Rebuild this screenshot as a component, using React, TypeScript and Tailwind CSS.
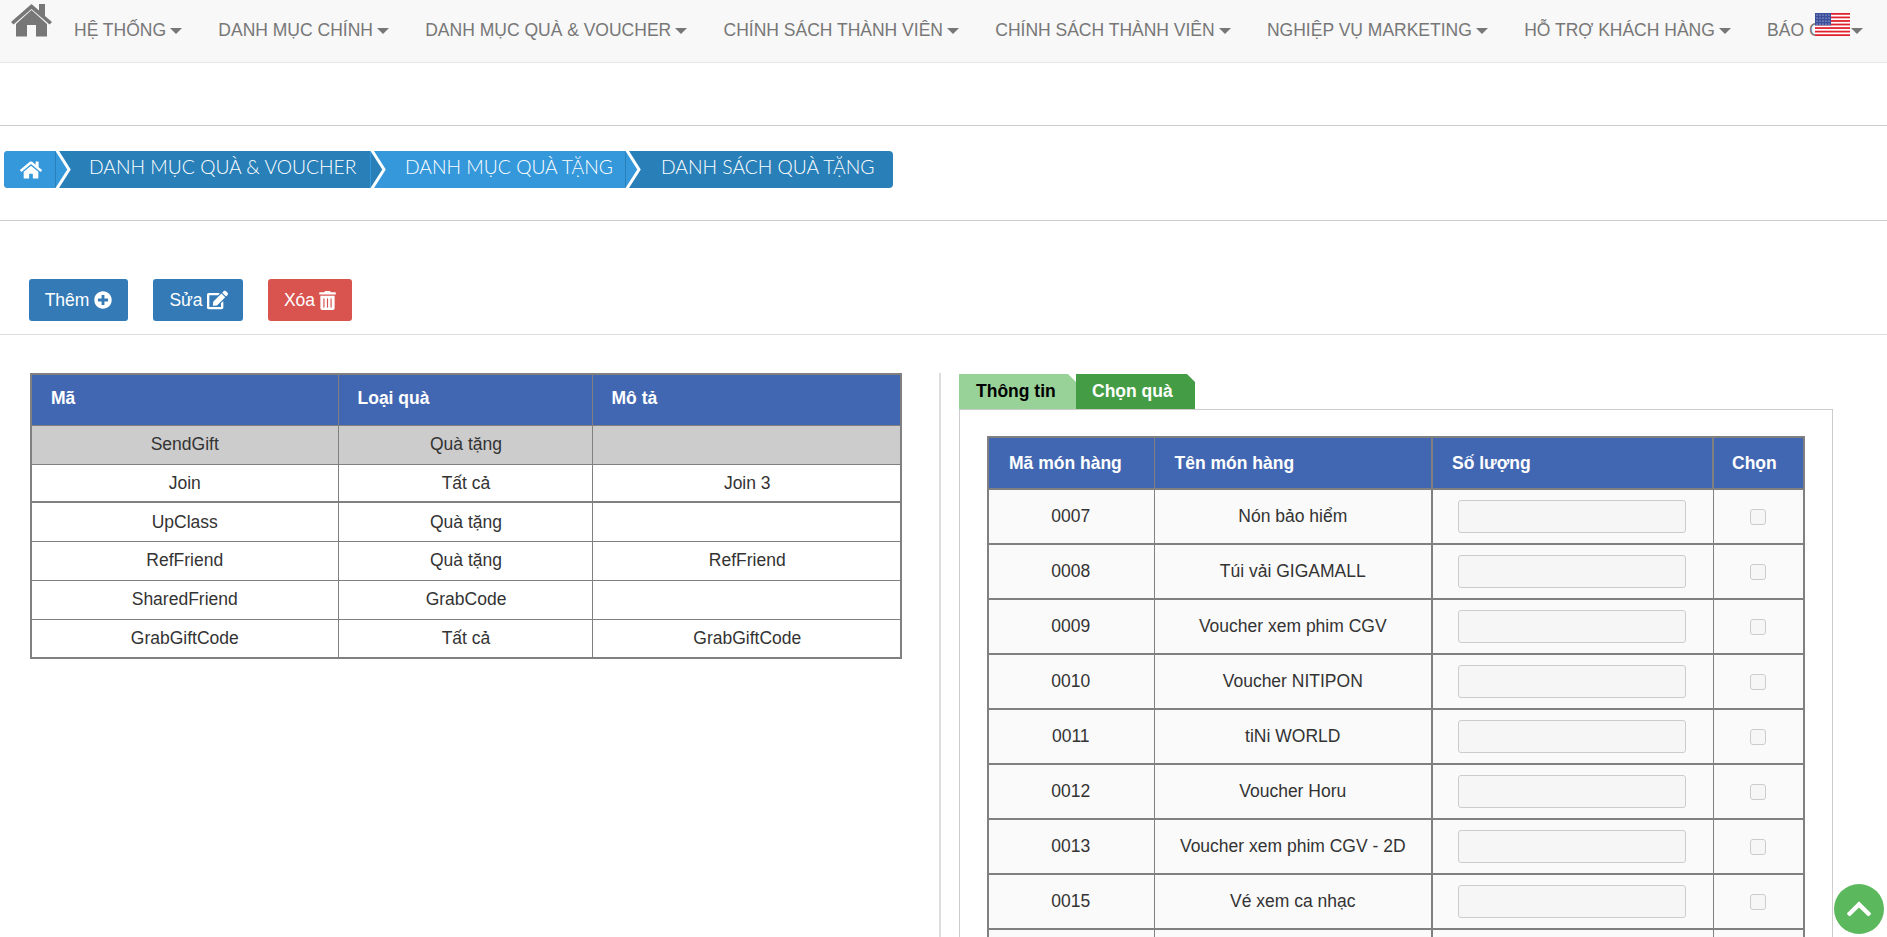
import { FaHome, FaPlusCircle, FaEdit, FaTrashAlt, FaChevronUp } from 'react-icons/fa';

const navItems = [
  'HỆ THỐNG',
  'DANH MỤC CHÍNH',
  'DANH MỤC QUÀ & VOUCHER',
  'CHÍNH SÁCH THÀNH VIÊN',
  'CHÍNH SÁCH THÀNH VIÊN',
  'NGHIỆP VỤ MARKETING',
  'HỖ TRỢ KHÁCH HÀNG',
  'BÁO CÁO',
];

const gifts = [
  { code: 'SendGift', type: 'Quà tặng', desc: '' },
  { code: 'Join', type: 'Tất cả', desc: 'Join 3' },
  { code: 'UpClass', type: 'Quà tặng', desc: '' },
  { code: 'RefFriend', type: 'Quà tặng', desc: 'RefFriend' },
  { code: 'SharedFriend', type: 'GrabCode', desc: '' },
  { code: 'GrabGiftCode', type: 'Tất cả', desc: 'GrabGiftCode' },
];

const items = [
  ['0007', 'Nón bảo hiểm'],
  ['0008', 'Túi vải GIGAMALL'],
  ['0009', 'Voucher xem phim CGV'],
  ['0010', 'Voucher NITIPON'],
  ['0011', 'tiNi WORLD'],
  ['0012', 'Voucher Horu'],
  ['0013', 'Voucher xem phim CGV - 2D'],
  ['0015', 'Vé xem ca nhạc'],
  ['', ''],
];

function Chevron({ className }: { className: string }) {
  return (
    <span className={`relative h-full w-[17px] shrink-0 ${className}`}>
      <svg viewBox="0 0 17 37" className="absolute left-0 top-0 h-full w-[17px]" preserveAspectRatio="none">
        <path d="M1 -2 L14 18.5 L1 39" fill="currentColor" stroke="#fff" strokeWidth="3" />
      </svg>
    </span>
  );
}

function NavHome() {
  return (
    <svg viewBox="0 0 41 33" className="ml-[11px] mt-[4px] h-[33px] w-[41px] shrink-0 fill-[#777]">
      <path d="M20.5 0 L28 6.5 V0 H34 V12 L41 18 L38.5 20.5 L20.5 5 L2.5 20.5 L0 18 Z" />
      <path d="M5 20 L20.5 6 L36 20 V32.5 H25 V21 H16 V32.5 H5 Z" />
    </svg>
  );
}

function UsFlag() {
  return (
    <svg viewBox="0 0 35 23" className="absolute left-[1815px] top-[13px] h-[23px] w-[35px]">
      <rect width="35" height="23" fill="#fff" />
      {[0, 2, 4, 6, 8, 10, 12].map((i) => (
        <rect key={i} y={i * 1.77} width="35" height="1.77" fill="#e0202c" />
      ))}
      <rect width="16" height="12.4" fill="#3c4f9c" />
      {[2, 5, 8, 11, 14].map((x) =>
        [2, 5, 8, 11].map((y) => <circle key={`${x}-${y}`} cx={x} cy={y} r="0.6" fill="#dfe3f5" />),
      )}
    </svg>
  );
}

export default function App() {
  return (
    <div className="relative h-[937px] overflow-hidden bg-white font-['Liberation_Sans',Arial,sans-serif] text-[#333]">
      {/* Navbar */}
      <nav className="flex h-[63px] items-start overflow-hidden border-b border-[#e7e7e7] bg-[#f8f8f8] text-[#777]">
        <NavHome />
        <ul className="ml-[22px] flex gap-[36.3px] pt-[20px] text-[17.5px] leading-[20px]">
          {navItems.map((item, i) => (
            <li key={i} className="flex items-center gap-[4px] whitespace-nowrap">
              {item}
              <span className="mt-[2px] h-0 w-0 border-x-[6px] border-t-[6px] border-x-transparent border-t-[#777]" />
            </li>
          ))}
        </ul>
      </nav>
      <UsFlag />

      <div className="h-[63px] border-b border-[#ccc]" />

      {/* Breadcrumb */}
      <div className="h-[95px] border-b border-[#ccc] pl-[4px] pt-[25px]">
        <div className="flex h-[37px] w-[889px] items-center overflow-hidden rounded-[4px] bg-[#2980b9] font-['Lato',sans-serif] text-[19.3px] font-light text-white">
          <div className="flex h-full w-[51px] items-center justify-center bg-[#3498db]">
            <FaHome className="ml-[3px] h-[20px] w-[22px]" />
          </div>
          <Chevron className="text-[#3498db]" />
          <div className="flex h-full w-[298px] items-center pb-[4px] pl-[17px] whitespace-nowrap">DANH MỤC QUÀ &amp; VOUCHER</div>
          <Chevron className="bg-[#3498db] text-[#2980b9]" />
          <div className="flex h-full w-[238px] items-center bg-[#3498db] pb-[4px] pl-[18px] whitespace-nowrap">DANH MỤC QUÀ TẶNG</div>
          <Chevron className="text-[#3498db]" />
          <div className="flex h-full flex-1 items-center pb-[4px] pl-[19px] whitespace-nowrap">DANH SÁCH QUÀ TẶNG</div>
        </div>
      </div>

      {/* Actions */}
      <div className="flex h-[114px] items-start gap-[25px] border-b border-[#ddd] pl-[29px] pt-[58px] text-[17.5px] text-white">
        <button className="flex h-[42px] w-[99px] items-center justify-center gap-[5px] rounded-[3px] bg-[#337ab7]">
          Thêm <FaPlusCircle className="h-[18px] w-[18px]" />
        </button>
        <button className="flex h-[42px] w-[90px] items-center justify-center gap-[4px] rounded-[3px] bg-[#337ab7] pl-[1px]">
          Sửa <FaEdit className="h-[20px] w-[21px]" />
        </button>
        <button className="flex h-[42px] w-[84px] items-center justify-center gap-[4px] rounded-[3px] bg-[#d9534f]">
          Xóa <FaTrashAlt className="h-[19px] w-[17px]" />
        </button>
      </div>

      <div className="flex pl-[30px] pt-[38px]">
        {/* Gift table */}
        <table className="h-fit w-[872px] table-fixed border-collapse border-2 border-[#808080] text-[17.5px]">
          <colgroup>
            <col className="w-[307px]" />
            <col className="w-[254px]" />
            <col />
          </colgroup>
          <thead>
            <tr className="h-[51px] bg-[#4267b2] text-left font-bold text-white">
              <th className="border border-[#808080] pb-[4px] pl-[19px]">Mã</th>
              <th className="border border-[#808080] pb-[4px] pl-[19px]">Loại quà</th>
              <th className="border border-[#808080] pb-[4px] pl-[19px]">Mô tả</th>
            </tr>
          </thead>
          <tbody>
            {gifts.map((g, i) => {
              const rowBorder = i === 1 ? 'border border-b-2 border-[#808080]' : 'border border-[#808080]';
              return (
                <tr key={g.code} className={`text-center ${i === 0 ? 'bg-[#ccc]' : 'bg-white'} ${i === 1 ? 'h-[38px]' : 'h-[39px]'}`}>
                  <td className={rowBorder}>{g.code}</td>
                  <td className={`${rowBorder} pl-[2px]`}>{g.type}</td>
                  <td className={`${rowBorder} pl-[2px]`}>{g.desc}</td>
                </tr>
              );
            })}
          </tbody>
        </table>

        <div className="ml-[37px] flex min-h-[600px] border-l-2 border-[#ddd] pl-[18px]">
          <div className="w-[874px]">
            {/* Tabs */}
            <div className="flex h-[36px] pt-[1px] text-[17.5px] font-bold leading-[34px]">
              <div className="w-[117px] bg-[#98d298] [clip-path:polygon(0_0,calc(100%-8px)_0,100%_8px,100%_100%,0_100%)] pl-[17px] text-black">Thông tin</div>
              <div className="w-[119px] bg-[#449d44] [clip-path:polygon(0_0,calc(100%-8px)_0,100%_8px,100%_100%,0_100%)] pl-[16px] text-white">Chọn quà</div>
            </div>
            {/* Item panel */}
            <div className="border border-[#ccc] pl-[27px] pr-[26px] pt-[26px]">
              <table className="w-[818px] table-fixed border-collapse border-2 border-[#808080] text-[17.5px]">
                <colgroup>
                  <col className="w-[166px]" />
                  <col className="w-[278px]" />
                  <col className="w-[281px]" />
                  <col />
                </colgroup>
                <thead>
                  <tr className="h-[52px] bg-[#4267b2] text-left font-bold text-white">
                    <th className="border border-[#808080] pl-[20px]">Mã món hàng</th>
                    <th className="border border-[#808080] pl-[20px]">Tên món hàng</th>
                    <th className="border border-x-2 border-[#808080] pl-[19px]">Số lượng</th>
                    <th className="border border-[#808080] pl-[18px]">Chọn</th>
                  </tr>
                </thead>
                <tbody>
                  {items.map(([code, name], i) => (
                    <tr key={i} className="h-[55px] bg-[#fafafa] text-center">
                      <td className="border-2 border-x border-[#808080] pr-[1px]">{code}</td>
                      <td className="border-2 border-x border-[#808080]">{name}</td>
                      <td className="border-2 border-r border-[#808080] pl-[25px] pr-[27px]">
                        <input disabled className="block h-[33px] w-full rounded-[3px] border border-[#ccc] bg-[#f6f6f6]" />
                      </td>
                      <td className="border-2 border-x border-[#808080]">
                        <input type="checkbox" disabled className="mx-auto block h-[16px] w-[16px] appearance-none rounded-[3px] border border-[#ccc] bg-[#f6f6f6]" />
                      </td>
                    </tr>
                  ))}
                </tbody>
              </table>
            </div>
          </div>
        </div>
      </div>

      {/* Back to top */}
      <div className="absolute left-[1834px] top-[884px] flex h-[50px] w-[50px] items-center justify-center rounded-full bg-[#5cb85c] text-white">
        <FaChevronUp className="h-[28px] w-[28px]" />
      </div>
    </div>
  );
}
